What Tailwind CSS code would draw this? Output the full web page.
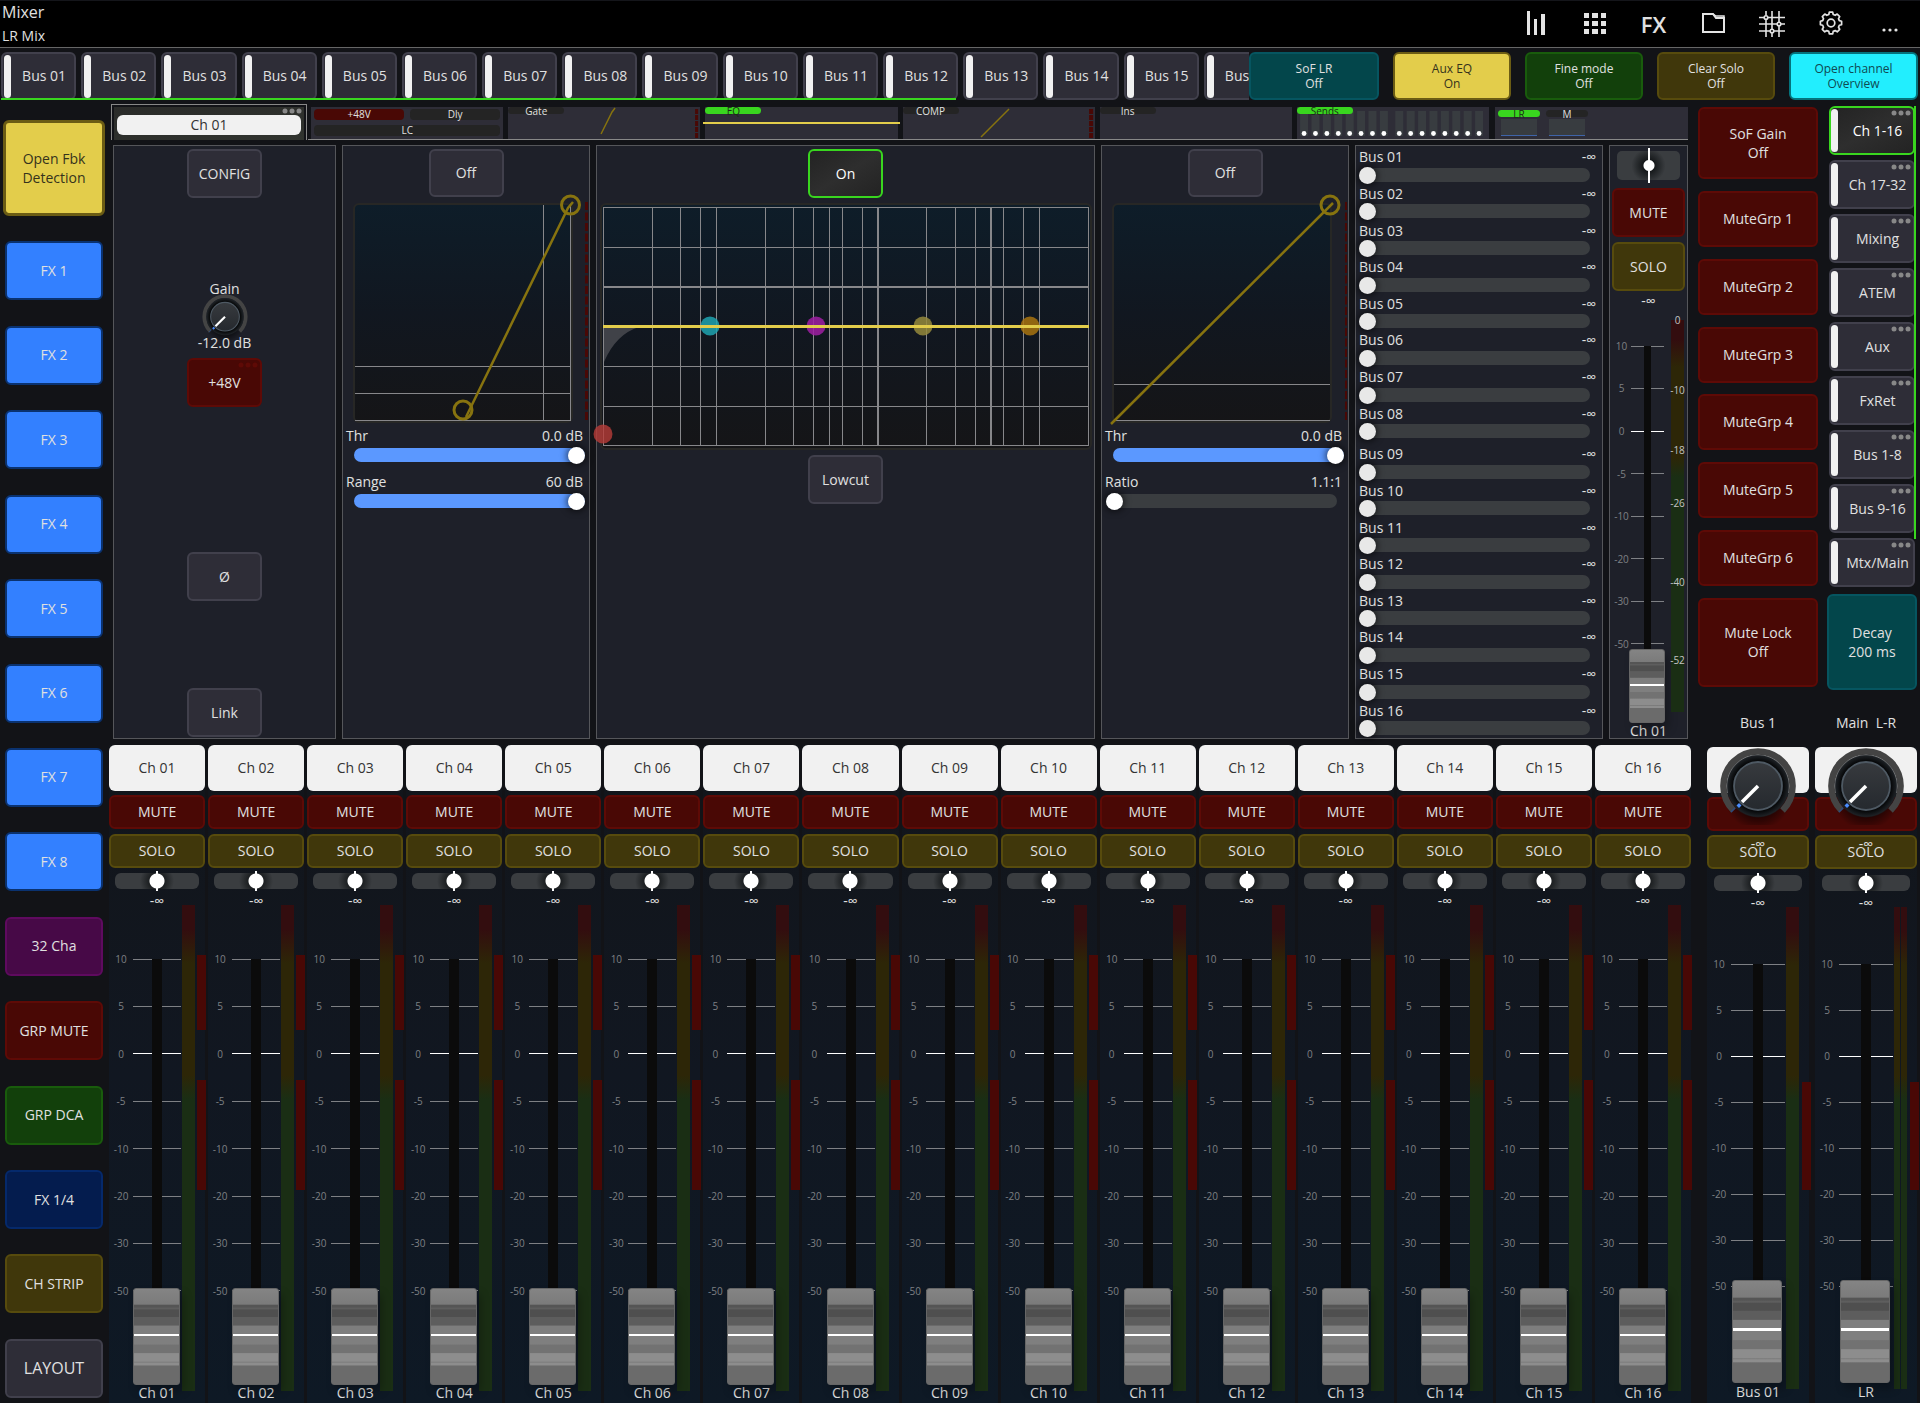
<!DOCTYPE html>
<html lang="en">
<head>
    <meta charset="UTF-8">
    <meta name="viewport" content="width=device-width, initial-scale=1.0">
    <title>Mixer - LR Mix</title>
    <script src="https://cdn.jsdelivr.net/npm/@tailwindcss/browser@4"></script>
    <style>
        input[type=range] {
            appearance: none;
            background: transparent;
        }
        input[type=range]::-webkit-slider-thumb {
            appearance: none;
        }
        /* Horizontal level sliders */
        .level::-webkit-slider-runnable-track {
            height: 14px;
            border-radius: 7px;
            background: #3a3d40;
        }
        .level.full::-webkit-slider-runnable-track {
            background: #5b98ff;
        }
        .level::-webkit-slider-thumb {
            width: 17px;
            height: 17px;
            margin-top: -1px;
            border-radius: 50%;
            background: #e8e8e8;
            box-shadow: 0 0 6px 2px rgba(0,0,0,0.5);
        }
        .level.bright::-webkit-slider-thumb {
            background: #fff;
        }
        /* Pan sliders */
        .pan::-webkit-slider-runnable-track {
            height: 16px;
            border-radius: 6px;
            background: radial-gradient(circle at center, #16191b 0 6px, #3a3d40 17px);
        }
        .pan::-webkit-slider-thumb {
            width: 16px;
            height: 20px;
            margin-top: -2px;
            background: radial-gradient(circle at center, #fff 7px, transparent 8px), linear-gradient(90deg, transparent 7px, #fff 7px 9px, transparent 9px);
        }
        .pan.tall::-webkit-slider-runnable-track {
            height: 29px;
            border-radius: 5px;
        }
        .pan.tall::-webkit-slider-thumb {
            height: 35px;
            margin-top: -3px;
            background: radial-gradient(circle at center, #fff 5px, transparent 6px), linear-gradient(90deg, transparent 7px, #fff 7px 9px, transparent 9px);
        }
        /* Vertical faders */
        .fader {
            writing-mode: vertical-lr;
            direction: rtl;
        }
        .fader::-webkit-slider-thumb {
            width: 47px;
            height: 97px;
            border: 1px solid #666;
            border-radius: 3px;
            background: linear-gradient(#848484, #7b7b7b 16%, #555 17% 19%, #5e5e5e 20% 21%, #4f4f4f 22% 29%, #5d5d5d 30% 38%, #7e7e7e 39% 47%, #fff 47% 50%, #7f7f7f 50% 58%, #727272 59% 67%, #8d8d8d 68% 76%, #7a7a7a 77%, #8d8d8d 78% 80%, #6b6b6b 81%);
            box-shadow: 4px 6px 8px rgba(0,0,0,0.25);
        }
        .fader.mini::-webkit-slider-thumb {
            width: 36px;
            height: 74px;
        }
        .fader.wide::-webkit-slider-thumb {
            width: 50px;
            height: 103px;
        }
    </style>
</head>
<body class="flex min-h-screen flex-col bg-[#121317] font-['Open_Sans',sans-serif] text-sm text-[#e0e0e0]">
    <!-- Header -->
    <header class="flex h-12 items-center justify-between border-t border-b border-t-[#14151a] border-b-[#666] bg-black">
        <div class="pl-0.5">
            <h1 class="text-base leading-6">Mixer</h1>
            <p class="leading-6">LR Mix</p>
        </div>
        <nav class="flex pr-px">
            <button class="flex w-[59px] justify-center" aria-label="Meters">
                <svg class="h-6 w-6" viewBox="0 0 24 24" fill="#e4e4e4"><path d="M3 0h3v24H3zM10 8h3v16h-3zM17 3h4v21h-4z"/></svg>
            </button>
            <button class="flex w-[59px] justify-center" aria-label="Grid">
                <svg class="h-6 w-6" viewBox="0 0 24 24" fill="#e4e4e4"><path d="M1 2h5v5H1zM9 2h6v5H9zM18 2h5v5h-5zM1 10h5v5H1zM9 10h6v5H9zM18 10h5v5h-5zM1 18h5v5H1zM9 18h6v5H9zM18 18h5v5h-5z"/></svg>
            </button>
            <button class="flex w-[59px] items-center justify-center text-[22px] leading-6 font-semibold">FX</button>
            <button class="flex w-[59px] justify-center" aria-label="Files">
                <svg class="h-6 w-6" viewBox="0 0 24 24" fill="none" stroke="#e4e4e4" stroke-width="2"><path d="M2 3h10l3 4h8v14H2z"/><path d="M12 3l3 2h8v2" stroke-width="1.5"/></svg>
            </button>
            <button class="flex w-[59px] justify-center" aria-label="Routing">
                <svg class="h-[26px] w-[26px]" viewBox="0 0 26 26" fill="none" stroke="#e4e4e4" stroke-width="1.6"><path d="M0 6.500h5M9 6.500h17M0 13h18M22 13h4M0 20h11M15 20h11M7 0v4.500M7 8.500V26M13 0v18M13 22v4M20 0v11M20 15v11"/><circle cx="7" cy="6.500" r="1.800"/><circle cx="20" cy="13" r="1.800"/><circle cx="13" cy="20" r="1.800"/></svg>
            </button>
            <button class="flex w-[59px] justify-center" aria-label="Settings">
                <svg class="h-6 w-6" viewBox="0 0 24 24" fill="none" stroke="#e4e4e4" stroke-width="1.700" stroke-linejoin="round"><path d="M10.300 1.200h3.400l.5 2.300 2 .8 2-1.200 2.500 2.500-1.200 2 .8 2 2.300.6v3.500l-2.300.6-.8 2 1.200 2-2.500 2.500-2-1.200-2 .8-.5 2.400h-3.400l-.5-2.400-2-.8-2 1.200-2.500-2.500 1.200-2-.8-2-2.300-.6v-3.500l2.300-.6.8-2-1.200-2 2.500-2.500 2 1.200 2-.8z"/><circle cx="12" cy="12" r="3.800"/></svg>
            </button>
            <button class="flex w-[59px] justify-center" aria-label="More">
                <svg class="h-6 w-6" viewBox="0 0 24 24" fill="#e4e4e4"><circle cx="6" cy="19" r="1.600"/><circle cx="12" cy="19" r="1.600"/><circle cx="18" cy="19" r="1.600"/></svg>
            </button>
        </nav>
    </header>

    <!-- Bus selection and global modes -->
    <div class="flex pt-1 pr-0.5 pl-px">
        <nav class="relative min-w-0 flex-1 overflow-hidden" aria-label="Buses">
            <div id="bus-tabs" class="grid w-[102.4%] grid-cols-16 gap-[5px]"></div>
            <div class="absolute bottom-0 left-0 h-0.5 w-[76.5%] bg-[#39d61f]"></div>
        </nav>
        <div class="flex gap-3.5 text-xs leading-[15px]">
            <button class="h-12 w-[130px] rounded-md border-2 border-[#065560] bg-[#03464b]">SoF LR<br>Off</button>
            <button class="h-12 w-[118px] rounded-md border-2 border-[#6b5c14] bg-[#e3cd4b] text-[#35331c]">Aux EQ<br>On</button>
            <button class="h-12 w-[118px] rounded-md border-2 border-[#195c0c] bg-[#12400b]">Fine mode<br>Off</button>
            <button class="h-12 w-[118px] rounded-md border-2 border-[#574b0d] bg-[#40370b]">Clear Solo<br>Off</button>
            <button class="h-12 w-[129px] rounded-md border-2 border-[#04737d] bg-[#22eefe] text-[#0f4a52]">Open channel<br>Overview</button>
        </div>
    </div>

    <div class="flex flex-1">
        <!-- Left shortcuts -->
        <aside class="flex w-[109px] shrink-0 flex-col justify-between pt-5 pr-1 pb-[5px] pl-[3px]">
            <button class="h-24 rounded-md border-[3px] border-[#6b5c14] bg-[#e3cd4b] leading-[19px] text-[#35331c]">Open Fbk<br>Detection</button>
            <button class="mx-0.5 h-[59px] rounded-md border-2 border-[#0a3270] bg-[#3380ff]">FX 1</button>
            <button class="mx-0.5 h-[59px] rounded-md border-2 border-[#0a3270] bg-[#3380ff]">FX 2</button>
            <button class="mx-0.5 h-[59px] rounded-md border-2 border-[#0a3270] bg-[#3380ff]">FX 3</button>
            <button class="mx-0.5 h-[59px] rounded-md border-2 border-[#0a3270] bg-[#3380ff]">FX 4</button>
            <button class="mx-0.5 h-[59px] rounded-md border-2 border-[#0a3270] bg-[#3380ff]">FX 5</button>
            <button class="mx-0.5 h-[59px] rounded-md border-2 border-[#0a3270] bg-[#3380ff]">FX 6</button>
            <button class="mx-0.5 h-[59px] rounded-md border-2 border-[#0a3270] bg-[#3380ff]">FX 7</button>
            <button class="mx-0.5 h-[59px] rounded-md border-2 border-[#0a3270] bg-[#3380ff]">FX 8</button>
            <button class="mx-0.5 h-[59px] rounded-md border-2 border-[#5f0a5f] bg-[#470947]">32 Cha</button>
            <button class="mx-0.5 h-[59px] rounded-md border-2 border-[#5e0a06] bg-[#490805]">GRP MUTE</button>
            <button class="mx-0.5 h-[59px] rounded-md border-2 border-[#195c0c] bg-[#12400b]">GRP DCA</button>
            <button class="mx-0.5 h-[59px] rounded-md border-2 border-[#05296b] bg-[#041c4e]">FX 1/4</button>
            <button class="mx-0.5 h-[59px] rounded-md border-2 border-[#574b0d] bg-[#40370b]">CH STRIP</button>
            <button class="mx-0.5 h-[59px] rounded-md border-2 border-[#41404c] bg-[#2e2d37] text-base">LAYOUT</button>
        </aside>

        <main class="flex min-w-0 flex-1 flex-col pt-1">
            <!-- Channel overview strip -->
            <div class="mr-[3px] ml-0.5 grid h-9 grid-cols-8 text-[10px] leading-[8px]">
                <div class="mr-px border border-b-0 border-[#888] p-0.5 pb-0">
                    <div class="relative h-full bg-linear-to-br from-[#2a2b29] to-[#31342f] px-[3px] pt-2">
                        <button class="block h-5 w-full rounded-md bg-[#f1f1f1] text-sm leading-5 text-[#333]">Ch 01</button>
                        <svg class="absolute top-0 right-0.5 h-[7px] w-5" viewBox="0 0 20 7" fill="#888"><circle cx="3" cy="4" r="2.500"/><circle cx="10" cy="4" r="2.500"/><circle cx="17" cy="4" r="2.500"/></svg>
                    </div>
                </div>
                <div class="border-b border-[#888] pt-[3px] pr-0.5 pl-[3px]">
                    <div class="grid h-full grid-cols-2 gap-x-1.5 gap-y-[5px] bg-[#2e2d37] px-[3px] pt-0.5 pb-[3px] text-center">
                        <span class="rounded-sm bg-[#490805] leading-[11px]">+48V</span>
                        <span class="rounded-sm bg-[#242424] leading-[11px]">Dly</span>
                        <span class="col-span-2 rounded-sm bg-[#242424] leading-[11px]">LC</span>
                    </div>
                </div>
                <div class="border-b border-[#888] pt-[3px] pr-0.5 pl-[3px]">
                    <div class="flex h-full items-start bg-[#2e2d37]">
                        <span class="h-[7px] w-14 rounded-sm bg-[#242424] text-center">Gate</span>
                        <svg class="h-full min-w-0 flex-1" viewBox="0 0 136 32"><path d="M37 27L48 5l3-4" fill="none" stroke="#87730f" stroke-width="1.500"/><path d="M132.500 2v29" stroke="#490805" stroke-width="3" stroke-dasharray="5 1"/></svg>
                    </div>
                </div>
                <div class="border-b border-[#888] pt-[3px] pr-0.5 pl-[3px]">
                    <div class="h-full bg-[#2e2d37]">
                        <span class="block h-[7px] w-14 rounded-sm bg-[#39d61f] text-center text-[#1b2a18]">EQ</span>
                        <div class="-mx-0.5 mt-2 h-0.5 bg-[#e3cd4b]"></div>
                    </div>
                </div>
                <div class="border-b border-[#888] pt-[3px] pr-0.5 pl-[3px]">
                    <div class="flex h-full items-start bg-[#2e2d37]">
                        <span class="h-[7px] w-14 rounded-sm bg-[#242424] text-center">COMP</span>
                        <svg class="h-full min-w-0 flex-1" viewBox="0 0 136 32"><path d="M22 30L50 2" fill="none" stroke="#87730f" stroke-width="1.500"/><path d="M132 2v29" stroke="#490805" stroke-width="4" stroke-dasharray="5 1"/></svg>
                    </div>
                </div>
                <div class="border-b border-[#888] pt-[3px] pr-0.5 pl-[3px]">
                    <div class="h-full bg-[#2e2d37]">
                        <span class="block h-[7px] w-14 rounded-sm bg-[#242424] text-center">Ins</span>
                    </div>
                </div>
                <div class="border-b border-[#888] pt-[3px] pr-0.5 pl-[3px]">
                    <div class="flex h-full flex-col bg-[#2e2d37]">
                        <span class="z-10 h-[7px] w-14 rounded-sm bg-[#39d61f] text-center text-[#1b2a18]">Sends</span>
                        <svg id="mini-sends" class="-mt-[3px] h-7 w-full" viewBox="0 0 192 28"></svg>
                    </div>
                </div>
                <div class="border-b border-[#888] pt-[3px] pl-1">
                    <div class="flex h-full gap-1.5 bg-[#2e2d37] px-[3px] pt-[3px] text-center">
                        <div class="w-[42px]">
                            <span class="block h-[7px] rounded-sm bg-[#39d61f] text-[#1b2a18]">LR</span>
                            <div class="mx-[3px] mt-0.5 h-[17px] border-b border-[#3f64a8] bg-[#383c40]"></div>
                        </div>
                        <div class="w-[42px]">
                            <span class="block h-[7px] rounded-sm bg-[#242424]">M</span>
                            <div class="mx-[3px] mt-0.5 h-[17px] border-b border-[#3f64a8] bg-[#383c40]"></div>
                        </div>
                    </div>
                </div>
            </div>

            <!-- Channel detail panels -->
            <div class="mt-[5px] mr-[3px] ml-1 grid min-h-[594px] grid-cols-[minmax(0,223fr)_minmax(0,248fr)_minmax(0,499fr)_minmax(0,248fr)_minmax(0,248fr)_minmax(0,79fr)] gap-1.5">
                <section class="flex flex-col items-center border border-[#55565a] bg-[#1e2029] pt-[3px] pb-px">
                    <button class="h-[49px] w-[75px] rounded-md border-2 border-[#41404c] bg-[#2e2d37]">CONFIG</button>
                    <div class="mt-[83px] flex flex-col items-center">
                        <span class="leading-4">Gain</span>
                        <svg class="-mt-[3px] h-[46px] w-12" viewBox="-40 -38 80 77" role="img" aria-label="Gain knob"><use href="#knob"/></svg>
                        <span class="-mt-[5px] leading-4">-12.0 dB</span>
                        <button class="relative mt-[7px] h-[49px] w-[75px] rounded-md border-2 border-[#5e0a06] bg-[#490805]">+48V
                            <svg class="absolute top-0.5 right-0.5 h-[7px] w-5" viewBox="0 0 20 7" fill="#5e0a06"><circle cx="3" cy="3" r="2.500"/><circle cx="10" cy="3" r="2.500"/><circle cx="17" cy="3" r="2.500"/></svg>
                        </button>
                    </div>
                    <button class="mt-[145px] h-[49px] w-[75px] rounded-md border-2 border-[#41404c] bg-[#2e2d37]">Ø</button>
                    <button class="mt-auto h-[49px] w-[75px] rounded-md border-2 border-[#41404c] bg-[#2e2d37]">Link</button>
                </section>

                <section class="border border-[#55565a] bg-[#1e2029] pt-[3px]">
                    <button class="mx-auto block h-12 w-[75px] rounded-md border-2 border-[#41404c] bg-[#2e2d37]">Off</button>
                    <svg class="block w-full overflow-visible" viewBox="0 0 246 229" role="img" aria-label="Gate curve">
                        <rect x="11" y="7" width="218" height="218" rx="5" fill="url(#screen)" stroke="#272725" stroke-width="2"/>
                        <path d="M200.500 8v216M227.500 8v216M12 169.500h216M12 196.500h216M12 223.500h216" stroke="#87878a" fill="none" shape-rendering="crispEdges"/>
                        <path d="M230 5l-5 6L123 220" fill="none" stroke="#87730f" stroke-width="2.500"/>
                        <circle cx="227.500" cy="8" r="9" fill="none" stroke="#87730f" stroke-width="3"/>
                        <circle cx="120" cy="213" r="9" fill="none" stroke="#87730f" stroke-width="3"/>
                        <path d="M243.500 5v220" stroke="#490805" stroke-width="3" stroke-dasharray="8 2.500"/>
                    </svg>
                    <div class="px-1">
                        <label for="gate-thr" class="-ml-px flex justify-between pr-0.5 leading-5"><span>Thr</span><span>0.0 dB</span></label>
                        <input id="gate-thr" type="range" class="level full bright ml-[7px] block h-[17px] w-[calc(100%-7px)]" value="100">
                        <label for="gate-range" class="mt-[9px] -ml-px flex justify-between pr-0.5 leading-5"><span>Range</span><span>60 dB</span></label>
                        <input id="gate-range" type="range" class="level full bright ml-[7px] block h-[17px] w-[calc(100%-7px)]" value="100">
                    </div>
                </section>

                <section class="border border-[#55565a] bg-[#1e2029] pt-[3px]">
                    <button class="mx-auto block h-[49px] w-[75px] rounded-md border-2 border-[#39d61f] bg-linear-to-br from-[#232323] via-[#2e2e2e] to-[#232323] text-white">On</button>
                    <svg id="eq-graph" class="block w-full overflow-visible" viewBox="0 0 497 257" role="img" aria-label="Equalizer curve"></svg>
                    <button class="mx-auto block h-[49px] w-[75px] rounded-md border-2 border-[#41404c] bg-[#2e2d37]">Lowcut</button>
                </section>

                <section class="border border-[#55565a] bg-[#1e2029] pt-[3px]">
                    <button class="mx-auto block h-12 w-[75px] rounded-md border-2 border-[#41404c] bg-[#2e2d37]">Off</button>
                    <svg class="block w-full overflow-visible" viewBox="0 0 246 229" role="img" aria-label="Compressor curve">
                        <rect x="11" y="7" width="218" height="218" rx="5" fill="url(#screen)" stroke="#272725" stroke-width="2"/>
                        <path d="M12 187.500h216M12 223.500h216" stroke="#87878a" fill="none" shape-rendering="crispEdges"/>
                        <path d="M9 227L231 6" fill="none" stroke="#87730f" stroke-width="2.500"/>
                        <circle cx="228" cy="8" r="9" fill="none" stroke="#87730f" stroke-width="3"/>
                        <path d="M244 5v220" stroke="#490805" stroke-width="2" stroke-dasharray="8 2.500"/>
                    </svg>
                    <div class="px-1">
                        <label for="comp-thr" class="-ml-px flex justify-between pr-0.5 leading-5"><span>Thr</span><span>0.0 dB</span></label>
                        <input id="comp-thr" type="range" class="level full bright ml-[7px] block h-[17px] w-[calc(100%-7px)]" value="100">
                        <label for="comp-ratio" class="mt-[9px] -ml-px flex justify-between pr-0.5 leading-5"><span>Ratio</span><span>1.1:1</span></label>
                        <input id="comp-ratio" type="range" class="level bright block h-[17px] w-[calc(100%-7px)]" value="0">
                    </div>
                </section>

                <section id="sends" class="flex flex-col gap-1 border border-[#55565a] bg-[#1e2029] py-px pr-1 pl-[3px]"></section>

                <section id="channel-fader" class="flex flex-col border border-[#55565a] bg-[#1e2029] px-0.5 pt-px"></section>
            </div>

            <!-- Channel strips -->
            <div id="channels" class="mt-1.5 grid flex-1 grid-cols-16 gap-[3px]"></div>
        </main>

        <aside class="flex w-[229px] shrink-0 flex-col pt-1.5 pr-[3px]">
            <div class="flex h-[584px] gap-[9px] pl-[7px]">
                <div class="flex w-[120px] flex-col justify-between pt-px pb-[3px]">
                    <button class="h-[72px] rounded-md border-2 border-[#5e0a06] bg-[#490805] leading-[19px]">SoF Gain<br>Off</button>
                    <button class="h-14 rounded-md border-2 border-[#5e0a06] bg-[#490805]">MuteGrp 1</button>
                    <button class="h-14 rounded-md border-2 border-[#5e0a06] bg-[#490805]">MuteGrp 2</button>
                    <button class="h-14 rounded-md border-2 border-[#5e0a06] bg-[#490805]">MuteGrp 3</button>
                    <button class="h-14 rounded-md border-2 border-[#5e0a06] bg-[#490805]">MuteGrp 4</button>
                    <button class="h-14 rounded-md border-2 border-[#5e0a06] bg-[#490805]">MuteGrp 5</button>
                    <button class="h-14 rounded-md border-2 border-[#5e0a06] bg-[#490805]">MuteGrp 6</button>
                    <button class="h-[89px] rounded-md border-2 border-[#5e0a06] bg-[#490805] leading-[19px]">Mute Lock<br>Off</button>
                </div>
                <div class="flex flex-1 flex-col justify-between">
                    <div id="layers" class="relative mr-0.5 ml-0.5 flex flex-col gap-[5px]"></div>
                    <button class="h-24 rounded-md border-2 border-[#065560] bg-[#03464b] leading-[19px]">Decay<br>200 ms</button>
                </div>
            </div>
            <div class="mt-[21px] grid grid-cols-2 gap-1.5 pl-4 text-center leading-6">
                <span>Bus 1</span>
                <span class="whitespace-pre">Main  L-R</span>
            </div>
            <div id="masters" class="mt-3 grid flex-1 grid-cols-2 gap-1.5 pl-4"></div>
        </aside>
    </div>

    <!-- Shared drawing parts -->
    <svg class="absolute h-0 w-0" aria-hidden="true">
        <defs>
            <linearGradient id="screen" x1="0" y1="0" x2="0" y2="1">
                <stop offset="0" stop-color="#0e1d29"/>
                <stop offset="0.500" stop-color="#111720"/>
                <stop offset="1" stop-color="#151517"/>
            </linearGradient>
            <linearGradient id="cap" x1="0" y1="0" x2="0" y2="1">
                <stop offset="0" stop-color="#373a3e"/>
                <stop offset="1" stop-color="#25292e"/>
            </linearGradient>
            <radialGradient id="shade">
                <stop offset="0.780" stop-color="#040506"/>
                <stop offset="0.960" stop-color="#1c2024"/>
                <stop offset="1" stop-color="#1c2024" stop-opacity="0.500"/>
            </radialGradient>
            <radialGradient id="drop">
                <stop offset="0.500" stop-color="#000" stop-opacity="0.700"/>
                <stop offset="1" stop-color="#000" stop-opacity="0"/>
            </radialGradient>
            <g id="knob">
                <ellipse cx="0" cy="10" rx="34" ry="34" fill="url(#drop)"/>
                <path d="M-24.500 24.500A34.600 34.600 0 1 1 24.500 24.500" fill="none" stroke="#444" stroke-width="6.500"/>
                <circle r="31.500" fill="url(#shade)"/>
                <circle r="24" fill="url(#cap)" stroke="#4e5963" stroke-width="1.800"/>
                <path d="M0 0L-16 16" stroke="#fff" stroke-width="3.600"/>
                <path d="M-27 26l4-4" stroke="#2b4a80" stroke-width="1.500"/>
                <path d="M-21.500 19.500l2.500-2.500 2.500 2.500-2.500 2.500z" fill="#4a8cff"/>
            </g>
        </defs>
    </svg>

    <script>
        const pad = n => String(n).padStart(2, '0');
        const scale = ['10', '5', '0', '-5', '-10', '-20', '-30', '-50'];

        // Bus tabs
        for (let i = 1; i <= 16; i++) {
            document.getElementById('bus-tabs').innerHTML += `
            <button class="flex h-12 items-center rounded-md border-2 border-[#41404c] bg-[#2e2d37] pl-px">
                <span class="h-[43px] w-[7px] rounded-full bg-[#f1f1f1]"></span>
                <span class="flex-1 pl-[3px] text-center">Bus ${pad(i)}</span>
            </button>`;
        }

        // Fader layers
        const layers = ['Ch 1-16', 'Ch 17-32', 'Mixing', 'ATEM', 'Aux', 'FxRet', 'Bus 1-8', 'Bus 9-16', 'Mtx/Main'];
        document.getElementById('layers').innerHTML = layers.map((name, i) => `
            <button class="${i === 0 ? 'border-[#39d61f] bg-linear-to-br from-[#232323] via-[#2e2e2e] to-[#232323] text-white' : 'border-[#41404c] bg-[#2e2d37]'} relative flex h-[49px] items-center rounded-md border-2">
                <span class="h-[43px] w-[7px] shrink-0 rounded-full bg-[#f1f1f1]"></span>
                <span class="flex-1 pl-1 text-center">${name}</span>
                <svg class="absolute top-0.5 right-0.5 h-[7px] w-5" viewBox="0 0 20 7" fill="#888"><circle cx="3" cy="3" r="2.500"/><circle cx="10" cy="3" r="2.500"/><circle cx="17" cy="3" r="2.500"/></svg>
            </button>`).join('') + '<div class="absolute top-0 -right-px bottom-12 w-0.5 bg-[#39d61f]"></div>';

        // Miniature sends
        let mini = '';
        for (let i = 0; i < 16; i++) {
            const x = 7 + i * 11.4 + (i > 7 ? 4 : 0);
            mini += `<rect x="${x - 4}" y="0" width="8" height="25" fill="#383c40"/><circle cx="${x}" cy="22.500" r="2.400" fill="#fff"/>`;
        }
        document.getElementById('mini-sends').innerHTML = mini;

        // Equalizer: frequency and gain grid, low cut area, curve and band handles
        const freq = [6.5, 55.5, 83.5, 103.5, 119.5, 168.5, 196.5, 216.5, 232.5, 245.5, 265.5, 329.5, 358.5, 378.5, 406.5, 426.5, 442.5, 491.5];
        const bands = [['#1fa3b0', 113], ['#a01fa3', 219], ['#958a3c', 326], ['#a8730f', 433]];
        document.getElementById('eq-graph').innerHTML = `
            <rect x="4" y="6" width="490" height="245" rx="5" fill="url(#screen)" stroke="#272725" stroke-width="2"/>
            <path d="${freq.map(x => `M${x} 9v239`).join('')}M6 9.500h486M6 49.500h486M6 168.500h486M6 208.500h486M6 247.500h486" stroke="#87878a" shape-rendering="crispEdges"/>
            <path d="M281 9v239M394 9v239M6 89h486" stroke="#87878a" stroke-width="2" shape-rendering="crispEdges"/>
            <path d="M7 129h35Q19 136 7 164z" fill="#404248"/>
            ${bands.map(([color, x]) => `<circle cx="${x}" cy="128" r="9.500" fill="${color}" fill-opacity="0.850"/>`).join('')}
            <path d="M6 128.500h486" stroke="#e3cd4b" stroke-width="3"/>
            <circle cx="6" cy="236" r="9.500" fill="#b83c38" fill-opacity="0.800"/>`;

        // Sends of the selected channel
        const sendRow = n => `
            <div class="flex flex-1 flex-col justify-center">
                <label for="send-${n}" class="flex justify-between pr-0.5 leading-[19px]"><span>Bus ${pad(n)}</span><span>-∞</span></label>
                <input id="send-${n}" type="range" class="level block h-[17px] w-[calc(100%-8px)]" value="0">
            </div>`;
        document.getElementById('sends').innerHTML = [1, 9].map(start =>
            `<div class="flex flex-1 flex-col">${[0, 1, 2, 3, 4, 5, 6, 7].map(i => sendRow(start + i)).join('')}</div>`).join('');

        const ticks = inner => scale.map(v => `
            <div class="flex h-3.5 items-center text-[10px] text-[#7e8084]">
                <span class="flex-1 text-center">${v}</span>
                <span class="${inner} ${v === '0' ? 'bg-white' : 'bg-[#7e8084]'} h-px"></span>
            </div>`).join('');

        // Fader of the selected channel
        document.getElementById('channel-fader').innerHTML = `
            <input type="range" class="pan tall mx-[5px] mt-px block h-[35px] min-w-0" aria-label="Pan" value="50">
            <button class="mt-[5px] h-[49px] rounded-md border-2 border-[#5e0a06] bg-[#490805]">MUTE</button>
            <button class="mt-[5px] h-[49px] rounded-md border-2 border-[#574b0d] bg-[#40370b]">SOLO</button>
            <div class="text-center leading-5">-∞</div>
            <div class="flex flex-1 pt-[9px]">
                <div class="relative flex flex-1 flex-col justify-between pt-[19px] pb-[72px] pr-[7px]">
                    ${ticks('w-[33px]')}
                    <div class="absolute top-[26px] right-5 bottom-16 w-[7px] bg-[#0b0b0b]"></div>
                    <input type="range" class="fader mini absolute right-1.5 bottom-0 h-[340px] w-9" aria-label="Level" value="0">
                </div>
                <div class="relative mr-px mb-[11px] w-[13px] bg-[linear-gradient(#330d0f_0%,#330d0f_5%,#2d2607_12%,#2d2607_35%,#1a2e14_40%)] text-[10px] leading-3 whitespace-nowrap text-[#c4c4c4]">
                    ${[['0', 0], ['-10', 17.8], ['-18', 33.2], ['-26', 46.6], ['-40', 66.8], ['-52', 86.7]].map(([v, y]) => `<span class="absolute left-1/2 -mt-1.5 -translate-x-1/2" style="top: ${y}%">${v}</span>`).join('')}
                </div>
            </div>
            <div class="text-center leading-[15px]">Ch 01</div>`;

        // Channel strips
        for (let i = 1; i <= 16; i++) {
            document.getElementById('channels').innerHTML += `
            <div class="flex flex-col bg-linear-to-b from-[#12151a] via-[#111721] to-[#0e1925]">
                <button class="h-[46px] rounded-md bg-[#f1f1f1] text-[#333]">Ch ${pad(i)}</button>
                <button class="mt-1 h-[34px] rounded-md border-2 border-[#5e0a06] bg-[#490805]">MUTE</button>
                <button class="mt-[5px] h-[34px] rounded-md border-2 border-[#574b0d] bg-[#40370b]">SOLO</button>
                <input type="range" class="pan mx-1.5 mt-[3px] block h-5 min-w-0" aria-label="Pan" value="50">
                <div class="pt-[5px] text-center leading-[9px]">-∞</div>
                <div class="flex flex-1">
                    <div class="relative flex flex-1 flex-col justify-between pt-[47px] pr-px pb-[87px]">
                        ${ticks('w-12')}
                        <div class="absolute top-[54px] right-5 bottom-20 w-2.5 bg-[#0b0b0b]"></div>
                        <input type="range" class="fader absolute right-0.5 bottom-0 h-[430px] w-[47px]" aria-label="Level" value="0">
                    </div>
                    <div class="-mb-1.5 w-[13px] bg-[linear-gradient(#330d0f_0%,#330d0f_5%,#2d2607_12%,#2d2607_35%,#1a2e14_40%)]"></div>
                    <div class="ml-0.5 w-2 pt-[50px]">
                        <div class="h-[75px] w-[9px] bg-[#490805]"></div>
                        <div class="mt-[50px] h-[110px] w-[9px] bg-[#490805]"></div>
                    </div>
                </div>
                <div class="pb-0.5 text-center leading-4">Ch ${pad(i)}</div>
            </div>`;
        }

        // Bus and main strips
        const masters = ['Bus 01', 'LR'];
        document.getElementById('masters').innerHTML = masters.map((name, i) => `
            <div class="relative flex flex-col bg-linear-to-b from-[#12151a] via-[#111721] to-[#0e1925]">
                <button class="h-[46px] rounded-md bg-[#f1f1f1]" aria-label="Select ${name}"></button>
                <button class="mt-1 h-[34px] rounded-md border-2 border-[#5e0a06] bg-[#490805]" aria-label="Mute ${name}"></button>
                <button class="mt-1 h-[34px] rounded-md border-2 border-[#574b0d] bg-[#40370b]">SOLO</button>
                <svg class="absolute inset-x-0 top-px mx-auto h-[77px] w-20" viewBox="-40 -38 80 77" role="img" aria-label="Encoder"><use href="#knob"/></svg>
                <span class="absolute inset-x-0 top-[89px] text-center leading-4">-∞</span>
                <input type="range" class="pan mx-[7px] mt-1 block h-5 min-w-0" aria-label="Pan" value="50">
                <div class="pt-[5px] text-center leading-[9px]">-∞</div>
                <div class="flex flex-1">
                    <div class="relative flex flex-1 flex-col justify-between pt-[50px] pr-px pb-[90px]">
                        ${ticks('w-[54px]')}
                        <div class="absolute top-[57px] right-[23px] bottom-20 w-2.5 bg-[#0b0b0b]"></div>
                        <input type="range" class="fader wide absolute right-1 bottom-0 h-[430px] w-[50px]" aria-label="Level" value="0">
                    </div>
                    <div class="-mb-1.5 flex w-[13px] gap-px">
                        <div class="flex-1 bg-[linear-gradient(#330d0f_0%,#330d0f_5%,#2d2607_12%,#2d2607_35%,#1a2e14_40%)]"></div>
                        ${i === 1 ? '<div class="flex-1 bg-[linear-gradient(#330d0f_0%,#330d0f_5%,#2d2607_12%,#2d2607_35%,#1a2e14_40%)]"></div>' : ''}
                    </div>
                    <div class="ml-[3px] w-[7px] pt-[175px]">
                        <div class="h-[108px] w-[9px] bg-[#490805]"></div>
                    </div>
                </div>
                <div class="pb-0.5 text-center leading-[18px]">${name}</div>
            </div>`).join('');
    </script>
</body>
</html>
